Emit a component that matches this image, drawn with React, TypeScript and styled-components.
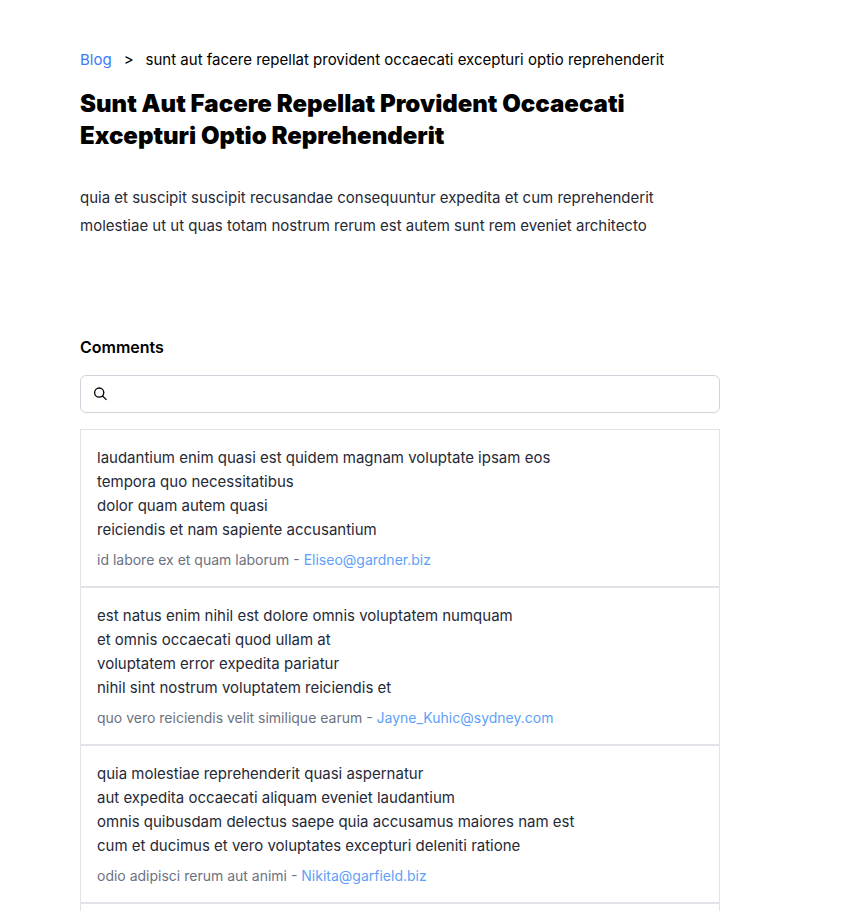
import React, { useId } from 'react';
import styled, { createGlobalStyle } from 'styled-components';

const GlobalStyle = createGlobalStyle`
  *, *::before, *::after { box-sizing: border-box; }
  body {
    margin: 0;
    background: #ffffff;
    color: #000000;
    font-family: Inter, 'Liberation Sans', sans-serif;
    font-size: 15px;
    line-height: 24px;
  }
  h1, h2, p, ul { margin: 0; padding: 0; }
  ul { list-style: none; }
`;

const Page = styled.main`
  display: flex;
  flex-direction: column;
  max-width: 800px;
  padding: 48px 80px 0;
`;

const Breadcrumb = styled.nav`
  display: flex;
  gap: 12px;
`;

const CrumbLink = styled.a`
  color: #3b7cf5;
  text-decoration: none;
`;

const Title = styled.h1`
  margin-top: 16px;
  font-size: 24px;
  line-height: 32px;
  font-weight: 900;
  text-transform: capitalize;
`;

const Body = styled.p`
  margin-top: 32px;
  line-height: 28px;
  color: #1f2937;
  white-space: pre-line;
`;

const SectionTitle = styled.h2`
  margin-top: 95px;
  font-size: 16px;
  line-height: 24px;
  font-weight: 600;
`;

const SearchBox = styled.label`
  display: flex;
  align-items: center;
  gap: 8px;
  height: 38px;
  margin-top: 16px;
  padding: 0 12px;
  border: 1px solid #d1d5db;
  border-radius: 6px;
`;

const SearchInput = styled.input`
  flex: 1;
  min-width: 0;
  border: 0;
  outline: 0;
  background: transparent;
  font: inherit;
`;

const CommentList = styled.ul`
  margin-top: 16px;
`;

const Comment = styled.li`
  padding: 16px;
  border: 1px solid #e2e3e8;
`;

const CommentText = styled.p`
  color: #1f2937;
  white-space: pre-line;
`;

const CommentMeta = styled.p`
  margin-top: 8px;
  font-size: 14px;
  line-height: 20px;
  color: #6b7280;
`;

const MailLink = styled.a`
  color: #609ff8;
  text-decoration: none;
`;

const post = {
  title: 'sunt aut facere repellat provident occaecati excepturi optio reprehenderit',
  body: 'quia et suscipit suscipit recusandae consequuntur expedita et cum reprehenderit\nmolestiae ut ut quas totam nostrum rerum est autem sunt rem eveniet architecto',
};

const comments = [
  {
    name: 'id labore ex et quam laborum',
    email: 'Eliseo@gardner.biz',
    body: 'laudantium enim quasi est quidem magnam voluptate ipsam eos\ntempora quo necessitatibus\ndolor quam autem quasi\nreiciendis et nam sapiente accusantium',
  },
  {
    name: 'quo vero reiciendis velit similique earum',
    email: 'Jayne_Kuhic@sydney.com',
    body: 'est natus enim nihil est dolore omnis voluptatem numquam\net omnis occaecati quod ullam at\nvoluptatem error expedita pariatur\nnihil sint nostrum voluptatem reiciendis et',
  },
  {
    name: 'odio adipisci rerum aut animi',
    email: 'Nikita@garfield.biz',
    body: 'quia molestiae reprehenderit quasi aspernatur\naut expedita occaecati aliquam eveniet laudantium\nomnis quibusdam delectus saepe quia accusamus maiores nam est\ncum et ducimus et vero voluptates excepturi deleniti ratione',
  },
];

const SearchIcon = () => (
  <svg width="16" height="16" viewBox="0 0 16 16" fill="none" stroke="#000" strokeWidth="1.3" aria-hidden="true">
    <circle cx="6.2" cy="6.6" r="4.6" />
    <path d="M9.3 9.7l4.2 4.2" />
  </svg>
);

export default function App() {
  const searchId = useId();
  return (
    <>
      <GlobalStyle />
      <Page>
        <Breadcrumb aria-label="Breadcrumb">
          <CrumbLink href="#blog">Blog</CrumbLink>
          <span>&gt;</span>
          <span>{post.title}</span>
        </Breadcrumb>
        <Title>{post.title}</Title>
        <Body>{post.body}</Body>
        <SectionTitle>Comments</SectionTitle>
        <SearchBox htmlFor={searchId}>
          <SearchIcon />
          <SearchInput id={searchId} type="text" aria-label="Search comments" />
        </SearchBox>
        <CommentList>
          {comments.map((c) => (
            <Comment key={c.email}>
              <CommentText>{c.body}</CommentText>
              <CommentMeta>
                {c.name} - <MailLink href={`mailto:${c.email}`}>{c.email}</MailLink>
              </CommentMeta>
            </Comment>
          ))}
          <Comment />
        </CommentList>
      </Page>
    </>
  );
}
